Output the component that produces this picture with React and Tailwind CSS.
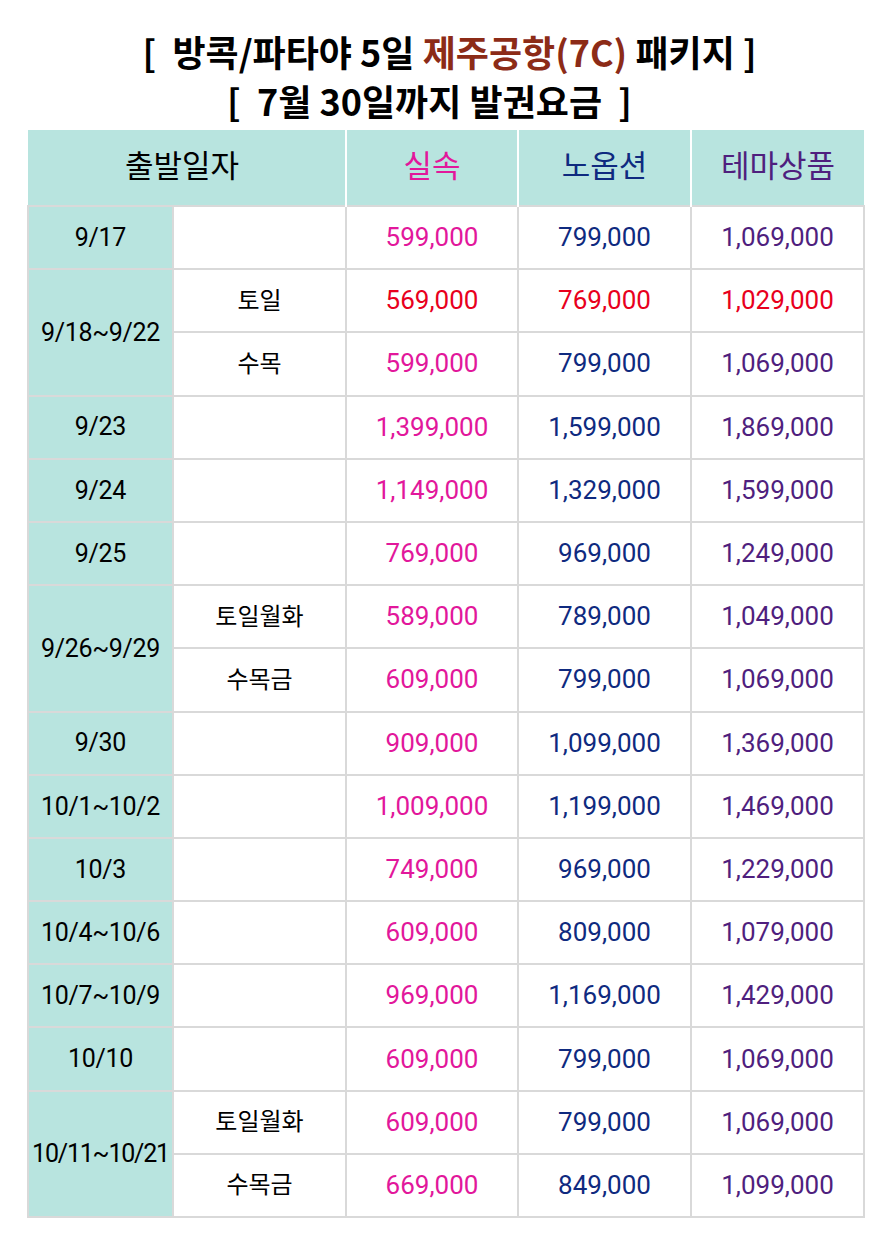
import React from "react";

const PINK = "text-[#e2179b]";
const NAVY = "text-[#0f2a7f]";
const PURPLE = "text-[#4f1f7e]";
const RED = "text-[#e8001d]";

const rows = [
  { date: "9/17", span: 1, sub: "", p: ["599,000", "799,000", "1,069,000"] },
  { date: "9/18~9/22", span: 2, sub: "토일", p: ["569,000", "769,000", "1,029,000"], red: true },
  { sub: "수목", p: ["599,000", "799,000", "1,069,000"] },
  { date: "9/23", span: 1, sub: "", p: ["1,399,000", "1,599,000", "1,869,000"] },
  { date: "9/24", span: 1, sub: "", p: ["1,149,000", "1,329,000", "1,599,000"] },
  { date: "9/25", span: 1, sub: "", p: ["769,000", "969,000", "1,249,000"] },
  { date: "9/26~9/29", span: 2, sub: "토일월화", p: ["589,000", "789,000", "1,049,000"] },
  { sub: "수목금", p: ["609,000", "799,000", "1,069,000"] },
  { date: "9/30", span: 1, sub: "", p: ["909,000", "1,099,000", "1,369,000"] },
  { date: "10/1~10/2", span: 1, sub: "", p: ["1,009,000", "1,199,000", "1,469,000"] },
  { date: "10/3", span: 1, sub: "", p: ["749,000", "969,000", "1,229,000"] },
  { date: "10/4~10/6", span: 1, sub: "", p: ["609,000", "809,000", "1,079,000"] },
  { date: "10/7~10/9", span: 1, sub: "", p: ["969,000", "1,169,000", "1,429,000"] },
  { date: "10/10", span: 1, sub: "", p: ["609,000", "799,000", "1,069,000"] },
  { date: "10/11~10/21", span: 2, sub: "토일월화", p: ["609,000", "799,000", "1,069,000"], tight: true },
  { sub: "수목금", p: ["669,000", "849,000", "1,099,000"] },
];

const cell = "border-2 border-[#d9d9d9] text-center align-middle p-0";

export default function App() {
  return (
    <div
      className="w-[891px] h-[1260px] bg-white"
      style={{ fontFamily: '"Roboto", "Noto Sans CJK KR", sans-serif' }}
    >
      <div
        className="pt-[27px] font-bold text-black text-[36px] leading-[49px]"
        style={{ fontFamily: '"Noto Sans CJK KR", sans-serif' }}
      >
        <div className="text-center whitespace-pre pl-[8px]">
          {"[  방콕/파타야 5일 "}
          <span className="text-[#8c2b17]">제주공항(7C)</span>
          {" 패키지 ]"}
        </div>
        <div className="text-center whitespace-pre pr-[32px]">{"[  7월 30일까지 발권요금  ]"}</div>
      </div>
      <table className="ml-[27px] mt-[5px] w-[836px] border-collapse table-fixed">
        <colgroup>
          <col className="w-[145px]" />
          <col className="w-[173px]" />
          <col className="w-[172px]" />
          <col className="w-[173px]" />
          <col className="w-[173px]" />
        </colgroup>
        <thead>
          <tr className="h-[76px] bg-[#b8e4df] text-[31px]">
            <th colSpan={2} className="font-normal text-black border-r-2 border-white pr-[9px]">출발일자</th>
            <th className={`font-normal ${PINK} border-r-2 border-white`}>실속</th>
            <th className={`font-normal ${NAVY} border-r-2 border-white`}>노옵션</th>
            <th className={`font-normal ${PURPLE}`}>테마상품</th>
          </tr>
        </thead>
        <tbody className="text-[26px]">
          {rows.map((r, i) => (
            <tr key={i} className="h-[63.2px]">
              {r.date !== undefined && (
                <td
                  rowSpan={r.span}
                  className={`${cell} bg-[#b8e4df] text-black text-[25px] ${r.tight ? "tracking-[-1.2px]" : "tracking-[-0.3px]"}`}
                >
                  {r.date}
                </td>
              )}
              <td className={`${cell} text-black text-[24px]`}>{r.sub}</td>
              <td className={`${cell} ${r.red ? RED : PINK}`}>{r.p[0]}</td>
              <td className={`${cell} ${r.red ? RED : NAVY}`}>{r.p[1]}</td>
              <td className={`${cell} ${r.red ? RED : PURPLE}`}>{r.p[2]}</td>
            </tr>
          ))}
        </tbody>
      </table>
    </div>
  );
}
